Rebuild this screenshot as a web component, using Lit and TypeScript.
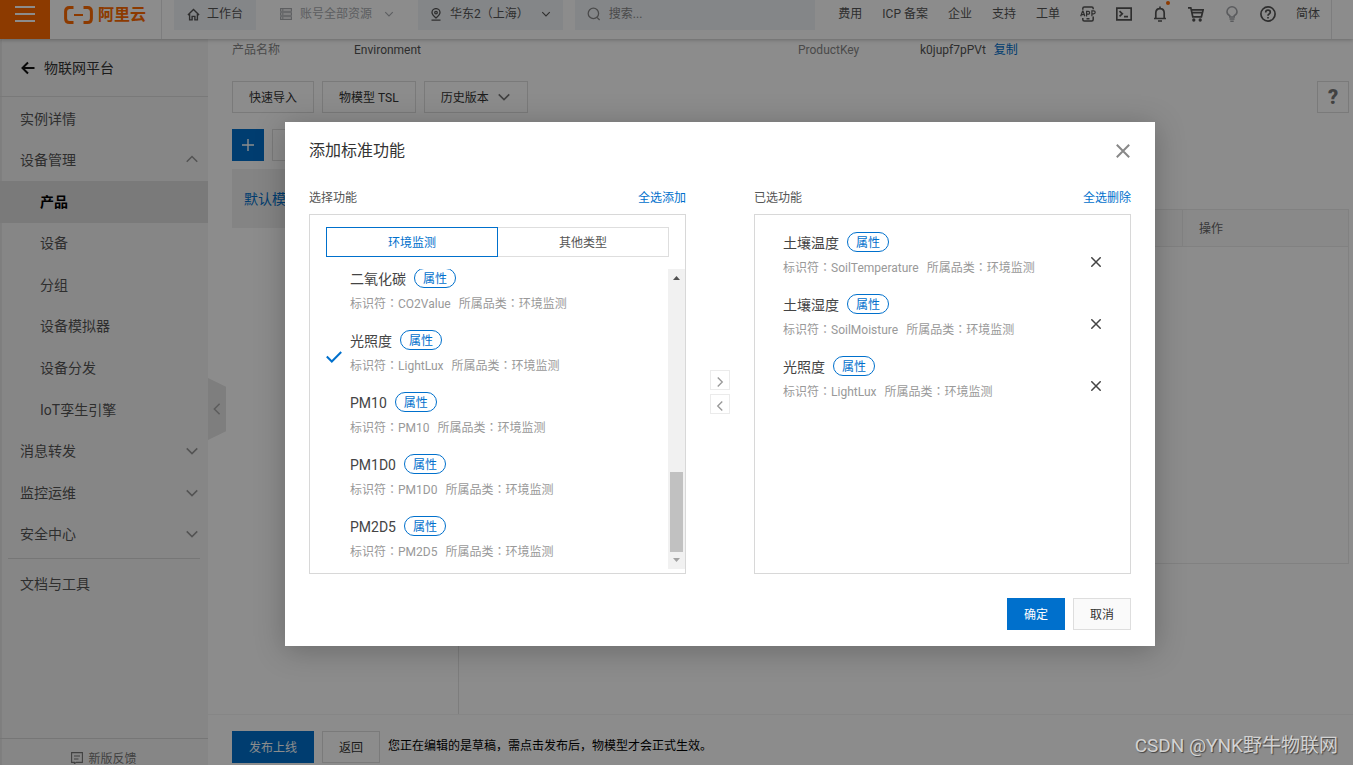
import { LitElement, html, css, svg, nothing } from "lit";
import { customElement, property, state } from "lit/decorators.js";
import { classMap } from "lit/directives/class-map.js";

const base = css`
  *, *::before, *::after { box-sizing: border-box; }
  button { font: inherit; color: inherit; background: none; border: 0; padding: 0; cursor: pointer; }
  a { color: inherit; text-decoration: none; }
  ul { list-style: none; margin: 0; padding: 0; }
  svg { display: block; flex: none; fill: none; stroke: currentColor; }
  .btn {
    display: inline-flex; align-items: center; justify-content: center;
    height: 32px; padding: 2px 16px 0; border: 1px solid #dedede;
    background: #fff; color: #333; white-space: nowrap;
  }
  .btn.primary { background: #0070cc; border-color: #0070cc; color: #fff; }
  .link { color: #0070cc; }
`;

const chevron = (d: "up" | "down" | "left" | "right", size = 14) => {
  const paths = {
    up: "M2 10 L8 4 L14 10",
    down: "M2 5 L8 11 L14 5",
    left: "M11 2 L5 8 L11 14",
    right: "M5 2 L11 8 L5 14",
  };
  return html`<svg width=${size} height=${size} viewBox="0 0 16 16" stroke-width="1.8">${svg`<path d=${paths[d]} />`}</svg>`;
};

interface Feature { name: string; id: string; picked?: boolean }

@customElement("console-header")
class ConsoleHeader extends LitElement {
  static styles = [base, css`
    :host {
      display: flex; flex: none; height: 39px; background: #fff; position: relative; z-index: 1;
      box-shadow: 0 1px 4px rgba(0, 0, 0, .25); color: #555;
    }
    .burger { width: 50px; background: #ff6a00; color: #fff; display: flex; justify-content: center; padding-top: 5px; }
    .brand { display: flex; gap: 5px; height: 30px; align-items: center; padding: 0 15px 0 14px; color: #ff6a00; }
    .brand-box { border-right: 1px solid #e3e4e6; margin-right: 12px; }
    .brand-name { font-size: 16px; font-weight: 700; white-space: nowrap; }
    .chip { display: flex; align-items: center; height: 30px; gap: 8px; padding: 0 12px 2px; white-space: nowrap; }
    .filled { background: #f1f4f8; }
    .home { gap: 7px; padding: 0 13px 2px; }
    .muted { color: #a9acb0; margin: 0 12px; }
    .muted .chev, .region .chev { margin-left: 4px; }
    .search { margin-left: 12px; flex: 0 1 240px; min-width: 80px; color: #888; }
    .search input { border: 0; background: none; outline: 0; font: inherit; color: #666; width: 100%; min-width: 0; padding: 0; }
    .search input::placeholder { color: #888; opacity: 1; }
    .right { margin-left: auto; display: flex; align-items: center; gap: 20px; height: 28px; white-space: nowrap; }
    .bell { position: relative; }
    .dot { position: absolute; width: 4px; height: 4px; border-radius: 50%; background: #ff6a00; right: -2px; top: -5px; }
    .pale { color: #a5a7ab; }
    .end { width: 22px; margin-left: 11px; border-left: 1px solid #e3e4e6; }
  `];
  render() {
    return html`
      <button class="burger" aria-label="菜单">
        <svg width="20" height="18" viewBox="0 0 20 18" stroke-width="2"><path d="M0 2H20M0 9H20M0 16H20" /></svg>
      </button>
      <div class="brand-box">
        <a class="brand" href="#">
          <svg width="29" height="18" viewBox="0 0 29 18" stroke-width="3">
            <path d="M9.5 1.5 H5.5 Q1.6 1.5 1.6 5.5 V12.5 Q1.6 16.5 5.5 16.5 H9.5 M19.5 1.5 H23.5 Q27.4 1.5 27.4 5.5 V12.5 Q27.4 16.5 23.5 16.5 H19.5" />
            <path d="M10 9H19" stroke-width="2" />
          </svg>
          <span class="brand-name">阿里云</span>
        </a>
      </div>
      <a class="chip filled home" href="#">
        <svg width="13" height="13" viewBox="0 0 14 14" stroke-width="1.5"><path d="M1 7.5 L7 1.5 L13 7.5 M2.8 6.5 V12.8 H5.5 V9 H8.5 V12.8 H11.2 V6.5" /></svg>
        工作台
      </a>
      <button class="chip muted">
        <svg width="12" height="12" viewBox="0 0 12 12" stroke-width="1.1">
          <path d="M.6 .6H11.4V3.2H.6ZM.6 4.7H11.4V7.3H.6ZM.6 8.8H11.4V11.4H.6ZM2 2H3.5M2 6H3.5M2 10H3.5" />
        </svg>
        账号全部资源 <span class="chev">${chevron("down", 10)}</span>
      </button>
      <button class="chip filled region">
        <svg width="12" height="13" viewBox="0 0 12 13" stroke-width="1.3">
          <path d="M6 10 C3.4 7.8 2 6.4 2 4.5 A4 3.9 0 0 1 10 4.5 C10 6.4 8.6 7.8 6 10Z M1.5 12.2H10.5" /><circle cx="6" cy="4.6" r="1.3" />
        </svg>
        华东2（上海） <span class="chev">${chevron("down", 10)}</span>
      </button>
      <label class="chip filled search">
        <svg width="14" height="14" viewBox="0 0 14 14" stroke-width="1.3"><circle cx="6.4" cy="6.4" r="5.2" /><path d="M10 10.4L12.6 13" /></svg>
        <input type="text" placeholder="搜索..." aria-label="搜索" />
      </label>
      <nav class="right">
        <a href="#">费用</a><a href="#">ICP 备案</a><a href="#">企业</a><a href="#">支持</a><a href="#">工单</a>
        <button aria-label="应用">
          <svg width="16" height="16" viewBox="0 0 16 16" stroke-width="1.5">
            <path d="M2.8 3.8V2.4Q2.8 .9 4.3 .9H11.7Q13.2 .9 13.2 2.4V3.2M2.8 12V13.6Q2.8 15.1 4.3 15.1H11.7Q13.2 15.1 13.2 13.6V10.5M6.5 12.7H9.5" />
            <path d="M.7 10.2L2.6 5H3L4.9 10.2M1.4 8.7H4.2M6.6 10.6V5.4H8.3Q9.6 5.4 9.6 6.8T8.3 8.2H6.8M11.9 10.2V4.8H13.6Q15.2 4.8 15.2 6.3T13.6 7.8H12" stroke-width="1.2" />
          </svg>
        </button>
        <button aria-label="命令行">
          <svg width="16" height="14" viewBox="0 0 16 14" stroke-width="1.7"><path d="M.8 1.2H15.2V12.8H.8ZM3.5 4.2L6.3 6.8L3.5 9.4M8 9.6H12" /></svg>
        </button>
        <button class="bell" aria-label="通知">
          <svg width="16" height="16" viewBox="0 0 16 16" stroke-width="1.7"><path d="M8 .5V2.3M3.8 12.3V7Q3.8 2.6 8 2.6T12.2 7V12.3M2 12.5H14M6 15H10" /></svg>
          <span class="dot"></span>
        </button>
        <button aria-label="购物车">
          <svg width="16" height="16" viewBox="0 0 16 16" stroke-width="1.7"><path d="M0 1.8H2.8L4.8 10.8H13.4L15.2 3.8H3.4M4.2 6.6H14.2" /><circle cx="5.8" cy="14" r=".8" /><circle cx="12.2" cy="14" r=".8" /></svg>
        </button>
        <button class="pale" aria-label="建议">
          <svg width="16" height="16" viewBox="0 0 16 16" stroke-width="1.6"><path d="M5.8 11V9.8C4.2 9 3 7.6 3 5.8A5 5 0 0 1 13 5.8C13 7.6 11.8 9 10.2 9.8V11ZM5.5 13H10.5M6.3 15.2H9.7" /></svg>
        </button>
        <button aria-label="帮助">
          <svg width="16" height="16" viewBox="0 0 16 16" stroke-width="1.7"><circle cx="8" cy="8" r="7.1" /><path d="M5.7 6.4Q5.7 4.2 8 4.2T10.3 6.2Q10.3 7.2 9.1 7.9Q8 8.5 8 9.8M8 11V12.4" /></svg>
        </button>
        <a href="#">简体</a>
      </nav>
      <div class="end"></div>
    `;
  }
}

@customElement("console-sidebar")
class ConsoleSidebar extends LitElement {
  static styles = [base, css`
    :host {
      display: flex; flex-direction: column; flex: 0 0 208px; background: #f5f5f5; color: #555;
      font-size: 14px; position: relative; box-shadow: inset 2px 0 1px #e6e6e6;
    }
    .back { display: flex; align-items: center; gap: 9px; height: 58px; padding: 0 21px; border-bottom: 1px solid #ddd; color: #333; }
    .back svg { color: #111; }
    .menu { display: grid; grid-auto-rows: 1fr; min-height: 457px; margin-top: 1px; }
    .row { display: flex; width: 100%; height: 100%; align-items: center; justify-content: space-between; padding: 0 9px 0 20px; text-align: left; }
    .menu .sub { padding-left: 40px; }
    .active { background: #dedede; color: #000; font-weight: 700; }
    .row svg { color: #999; }
    .docs { margin: 3px 8px 0; padding-top: 4px; border-top: 1px solid #d8d8d8; flex: 1; }
    .docs a { display: flex; align-items: center; height: 42px; padding-left: 12px; }
    .feedback { display: flex; justify-content: center; gap: 5px; flex: 0 0 27px; padding-top: 10px; overflow: hidden; border-top: 1px solid #d8d8d8; font-size: 12px; line-height: 20px; color: #777; }
    .feedback svg { margin-top: 3px; }
    .fold {
      position: absolute; left: 100%; top: 339px; width: 18px; height: 62px; background: #e6e6e6; color: #aaa;
      display: flex; align-items: center; justify-content: center; clip-path: polygon(0 0, 100% 14%, 100% 86%, 0 100%);
    }
  `];
  private rows: { text: string; kind?: "sub" | "open" | "closed"; active?: boolean }[] = [
    { text: "实例详情" },
    { text: "设备管理", kind: "open" },
    { text: "产品", kind: "sub", active: true },
    { text: "设备", kind: "sub" },
    { text: "分组", kind: "sub" },
    { text: "设备模拟器", kind: "sub" },
    { text: "设备分发", kind: "sub" },
    { text: "IoT孪生引擎", kind: "sub" },
    { text: "消息转发", kind: "closed" },
    { text: "监控运维", kind: "closed" },
    { text: "安全中心", kind: "closed" },
  ];
  render() {
    return html`
      <a class="back" href="#">
        <svg width="14" height="14" viewBox="0 0 14 14" stroke-width="2"><path d="M13.5 7H1.5M7 1.5L1.5 7L7 12.5" /></svg>
        物联网平台
      </a>
      <ul class="menu">
        ${this.rows.map((r) => html`<li>${r.kind === "open" || r.kind === "closed"
          ? html`<button class="row" aria-expanded=${r.kind === "open"}>${r.text}${chevron(r.kind === "open" ? "up" : "down")}</button>`
          : html`<a href="#" class=${classMap({ row: true, sub: r.kind === "sub", active: !!r.active })}>${r.text}</a>`}</li>`)}
      </ul>
      <div class="docs"><a href="#">文档与工具</a></div>
      <a class="feedback" href="#">
        <svg width="12" height="12" viewBox="0 0 12 12" stroke-width="1.1"><path d="M.6 .6H11.4V10.4H5.2L3.4 11.6V10.4H.6ZM3 4H9M3 7H7.5" /></svg>
        新版反馈
      </a>
      <button class="fold" aria-label="收起">${chevron("left", 14)}</button>
    `;
  }
}

@customElement("product-page")
class ProductPage extends LitElement {
  static styles = [base, css`
    :host { display: flex; flex-direction: column; flex: 1; min-width: 0; background: #fff; color: #333; }
    .content { flex: 1; min-height: 0; display: flex; flex-direction: column; padding: 0 4px 0 24px; }
    .info { display: grid; grid-template-columns: 122px 444fr 122px 429fr; line-height: 22px; margin: 0 0 20px; }
    .info dt { color: #888; }
    .info dd { margin: 0; display: flex; gap: 8px; color: #555; }
    .tools { display: flex; gap: 8px; margin-bottom: 16px; }
    .history svg { color: #777; margin-bottom: 2px; }
    .history { gap: 8px; }
    .help { width: 32px; padding: 0; margin-left: auto; font-size: 20px; font-weight: 900; color: #777; }
    .modules { display: flex; gap: 8px; margin-bottom: 8px; }
    .plus { width: 32px; padding: 0; }
    .finder { width: 186px; height: 32px; border: 1px solid #dedede; }
    .split { flex: 1; min-height: 0; display: flex; }
    .tree { flex: 0 0 227px; border-right: 1px solid #e3e3e3; }
    .tree a { display: flex; align-items: center; height: 59px; padding: 0 12px; background: #f0f0f0; font-size: 14px; }
    .table { flex: 1; margin: 40px 0 0 24px; height: 355px; border: 1px solid #ebebeb; border-collapse: collapse; table-layout: fixed; }
    .table th { height: 37px; padding: 2px 16px 0; text-align: left; font-weight: 400; color: #666; background: #fafafa; border: 1px solid #ebebeb; }
    .table th:last-child { width: 166px; }
    .table td { border: 0; }
    .actions { display: flex; gap: 8px; flex: none; padding: 16px 24px 2px; border-top: 1px solid #f5f5f5; color: #000; }
    .actions p { margin: 0; line-height: 30px; }
  `];
  render() {
    return html`
      <div class="content">
        <dl class="info">
          <dt>产品名称</dt><dd>Environment</dd>
          <dt>ProductKey</dt><dd>k0jupf7pPVt <a class="link" href="#">复制</a></dd>
        </dl>
        <div class="tools">
          <button class="btn">快速导入</button>
          <button class="btn">物模型 TSL</button>
          <button class="btn history">历史版本 ${chevron("down")}</button>
          <button class="btn help" aria-label="帮助">?</button>
        </div>
        <div class="modules">
          <button class="btn primary plus" aria-label="添加模块">
            <svg width="12" height="12" viewBox="0 0 12 12" stroke-width="1.4"><path d="M6 0V12M0 6H12" /></svg>
          </button>
          <input class="finder" type="text" aria-label="模块名称" />
        </div>
        <div class="split">
          <nav class="tree"><a class="link" href="#">默认模块</a></nav>
          <table class="table">
            <thead><tr><th></th><th>操作</th></tr></thead>
            <tbody><tr><td colspan="2"></td></tr></tbody>
          </table>
        </div>
      </div>
      <footer class="actions">
        <button class="btn primary">发布上线</button>
        <button class="btn">返回</button>
        <p>您正在编辑的是草稿，需点击发布后，物模型才会正式生效。</p>
      </footer>
    `;
  }
}

@customElement("feature-item")
class FeatureItem extends LitElement {
  @property({ attribute: false }) feature!: Feature;
  static styles = [base, css`
    :host { display: block; height: 62px; padding-top: 4px; white-space: nowrap; }
    .name { display: flex; align-items: center; gap: 8px; height: 20px; margin-bottom: 5px; font-size: 14px; line-height: 20px; color: #444; }
    .name b { font-weight: 400; padding-top: 2px; }
    .tag { height: 20px; padding: 0 8px; border: 1px solid #0070cc; border-radius: 10px; color: #0070cc; font-size: 12px; line-height: 21px; }
    .meta { display: flex; gap: 8px; line-height: 20px; color: #999; }
    .colon { font-family: "Noto Sans CJK TC", sans-serif; }
  `];
  render() {
    const colon = html`<span class="colon">：</span>`;
    return html`
      <div class="name"><b>${this.feature.name}</b><span class="tag">属性</span></div>
      <div class="meta"><span>标识符${colon}${this.feature.id}</span><span>所属品类${colon}环境监测</span></div>
    `;
  }
}

@customElement("feature-dialog")
class FeatureDialog extends LitElement {
  @state() private tab = 0;
  @state() private chosen: Feature[] = [
    { name: "土壤温度", id: "SoilTemperature" },
    { name: "土壤湿度", id: "SoilMoisture" },
    { name: "光照度", id: "LightLux" },
  ];
  private features: Feature[] = [
    { name: "二氧化碳", id: "CO2Value" },
    { name: "光照度", id: "LightLux", picked: true },
    { name: "PM10", id: "PM10" },
    { name: "PM1D0", id: "PM1D0" },
    { name: "PM2D5", id: "PM2D5" },
  ];
  static styles = [base, css`
    :host {
      display: block; width: 100%; max-width: 870px; padding: 0 24px 16px; background: #fff; color: #555;
      box-shadow: 0 4px 28px rgba(0, 0, 0, .25);
    }
    .top { display: flex; justify-content: space-between; align-items: center; height: 58px; }
    h2 { margin: 0; font-size: 16px; font-weight: 400; color: #333; }
    .close { color: #888; padding: 1px; }
    .transfer { display: grid; grid-template-columns: 1fr 68px 1fr; }
    .caption { display: flex; justify-content: space-between; align-items: center; height: 34px; padding-top: 2px; }
    .box { height: 360px; border: 1px solid #d8d8d8; }
    .source { display: flex; flex-direction: column; padding: 12px 0 4px 16px; }
    .tabs { display: flex; margin: 0 16px 12px 0; height: 30px; flex: none; }
    .tab { flex: 1; border: 1px solid #dedede; margin-left: -1px; padding-top: 2px; }
    .tab.on { border-color: #0070cc; color: #0070cc; position: relative; z-index: 1; }
    .tabs .tab:first-child { margin-left: 0; }
    .scroll { display: flex; flex: 1; min-height: 0; overflow: hidden; }
    .list { flex: 1; margin-top: -5px; }
    .list li { display: grid; grid-template-columns: 24px 1fr; align-items: center; }
    .check { color: #0070cc; }
    .bar { display: flex; flex-direction: column; align-items: center; width: 17px; background: #f1f1f1; }
    .bar svg { stroke: none; fill: #505050; height: 17px; }
    .bar .low { fill: #a3a3a3; }
    .thumb { width: 13px; height: 80px; margin-top: auto; background: #c1c1c1; }
    .middle { display: flex; flex-direction: column; align-items: center; justify-content: center; gap: 4px; padding-top: 30px; }
    .move { display: flex; align-items: center; justify-content: center; width: 20px; height: 20px; padding-top: 3px; border: 1px solid #ebebeb; color: #999; }
    .target { padding: 13px 24px 0 28px; }
    .target li { display: grid; grid-template-columns: 1fr 20px; align-items: center; }
    .remove { display: flex; justify-content: center; padding-top: 5px; color: #444; }
    .foot { display: flex; justify-content: flex-end; gap: 8px; padding-top: 24px; }
    .cancel { background: #fafafa; }
  `];
  private remove(f: Feature) { this.chosen = this.chosen.filter((c) => c !== f); }
  render() {
    return html`
      <div class="top">
        <h2>添加标准功能</h2>
        <button class="close" aria-label="关闭"><svg width="14" height="14" viewBox="0 0 14 14" stroke-width="2"><path d="M.8 .8L13.2 13.2M13.2 .8L.8 13.2" /></svg></button>
      </div>
      <div class="transfer">
        <section>
          <div class="caption"><span>选择功能</span><a class="link" href="#">全选添加</a></div>
          <div class="box source">
            <div class="tabs">
              ${["环境监测", "其他类型"].map((t, i) => html`<button class=${classMap({ tab: true, on: this.tab === i })} @click=${() => (this.tab = i)}>${t}</button>`)}
            </div>
            <div class="scroll">
              <ul class="list">
                ${this.features.map((f) => html`<li>
                  <span class="check">${f.picked ? html`<svg width="16" height="12" viewBox="0 0 16 12" stroke-width="2"><path d="M.8 5.5L5.8 10.5L15.2 1" /></svg>` : nothing}</span>
                  <feature-item .feature=${f}></feature-item>
                </li>`)}
              </ul>
              <div class="bar">
                <svg width="9" height="17" viewBox="0 0 9 17"><path d="M1 11L4.5 7L8 11Z" /></svg>
                <div class="thumb"></div>
                <svg class="low" width="9" height="17" viewBox="0 0 9 17"><path d="M1 6L4.5 10L8 6Z" /></svg>
              </div>
            </div>
          </div>
        </section>
        <div class="middle">
          <button class="move" aria-label="添加">${chevron("right", 12)}</button>
          <button class="move" aria-label="移除">${chevron("left", 12)}</button>
        </div>
        <section>
          <div class="caption"><span>已选功能</span><a class="link" href="#">全选删除</a></div>
          <ul class="box target">
            ${this.chosen.map((f) => html`<li>
              <feature-item .feature=${f}></feature-item>
              <button class="remove" aria-label="删除" @click=${() => this.remove(f)}><svg width="10" height="10" viewBox="0 0 10 10" stroke-width="1.5"><path d="M.3 .3L9.7 9.7M9.7 .3L.3 9.7" /></svg></button>
            </li>`)}
          </ul>
        </section>
      </div>
      <div class="foot"><button class="btn primary">确定</button><button class="btn cancel">取消</button></div>
    `;
  }
}

@customElement("app-root")
class AppRoot extends LitElement {
  static styles = [base, css`
    :host {
      display: flex; flex-direction: column; height: 100vh; overflow: hidden; position: relative;
      font-family: Roboto, "Noto Sans CJK SC", sans-serif; font-size: 12px; line-height: 18px;
    }
    .body { display: flex; flex: 1; min-height: 0; }
    .overlay {
      position: absolute; inset: 0; z-index: 5; display: flex; justify-content: center; align-items: flex-start;
      padding: 122px 0 0 87px; background: rgba(0, 0, 0, .45);
    }
    .mark {
      position: absolute; z-index: 6; right: 15px; bottom: 5px; font-size: 19px; line-height: 28px;
      color: #d2d2d2; text-shadow: 1px 1px 1px #444;
    }
  `];
  render() {
    return html`
      <console-header></console-header>
      <div class="body">
        <console-sidebar></console-sidebar>
        <product-page></product-page>
      </div>
      <div class="overlay"><feature-dialog role="dialog" aria-label="添加标准功能"></feature-dialog></div>
      <span class="mark">CSDN @YNK野牛物联网</span>
    `;
  }
}
